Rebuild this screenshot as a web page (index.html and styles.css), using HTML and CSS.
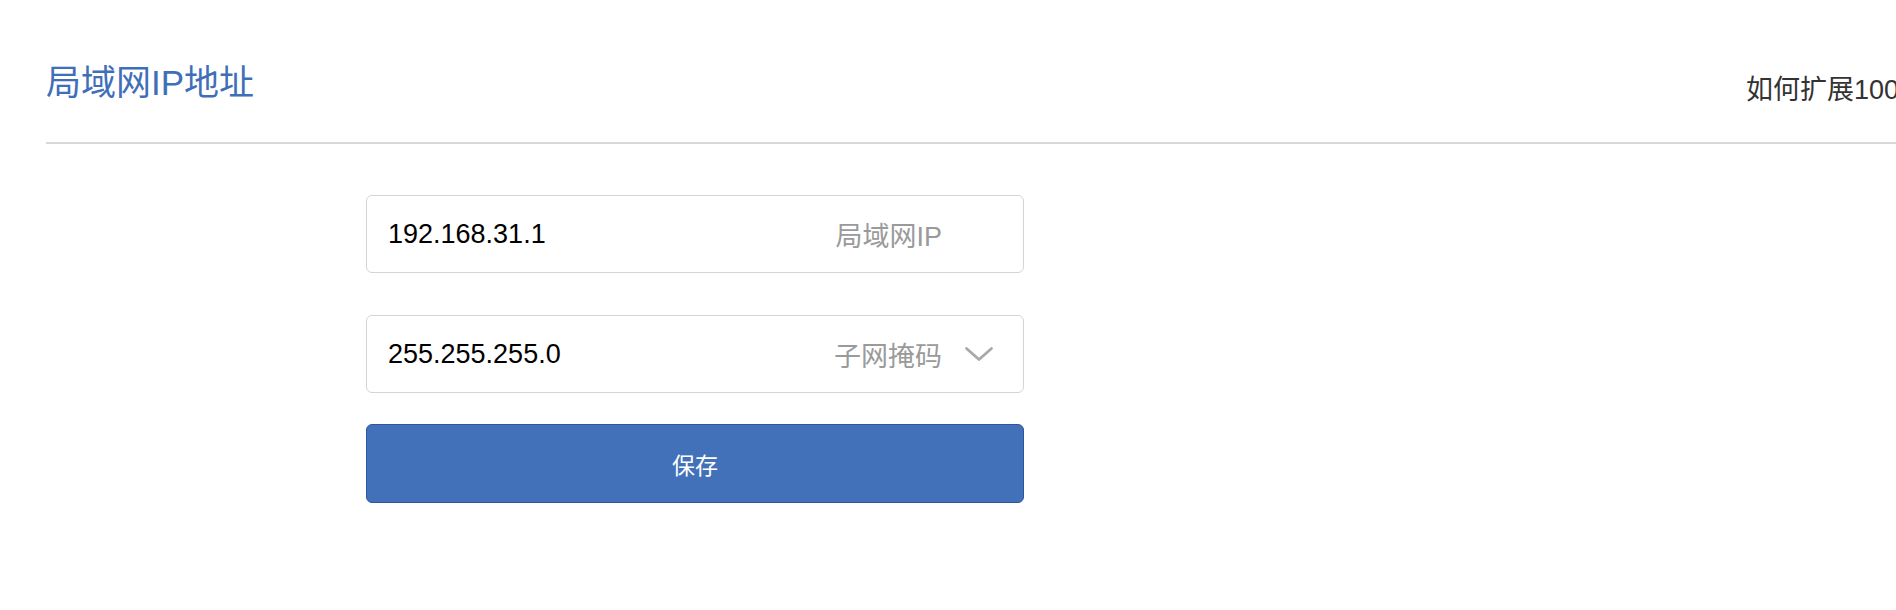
FILE: index.html
```html
<!DOCTYPE html>
<html lang="zh-CN">
<head>
    <meta charset="UTF-8">
    <title>局域网IP地址</title>
    <meta name="viewport" content="width=device-width, initial-scale=1.0">
    <link rel="stylesheet" href="styles.css">
</head>
<body>
    <div class="panel">
        <div class="header">
            <h1 class="title">局域网IP地址</h1>
            <a class="help" href="#">如何扩展100M宽带？</a>
        </div>
        <form class="form" onsubmit="return false;">
            <div class="field field-ip">
                <span class="value">192.168.31.1</span>
                <span class="label">局域网IP</span>
                <span class="suffix"></span>
            </div>
            <div class="field field-mask">
                <span class="value">255.255.255.0</span>
                <span class="label">子网掩码</span>
                <span class="suffix">
                    <svg width="30" height="16" viewBox="0 0 30 16">
                        <path d="M2.5 2.5 L15 13.5 L27.5 2.5" fill="none" stroke="#a9a9a9" stroke-width="2.8" stroke-linecap="round" stroke-linejoin="round"/>
                    </svg>
                </span>
            </div>
            <button class="save-btn" type="submit">保存</button>
        </form>
    </div>
</body>
</html>
```

FILE: styles.css
```css
body {
    font-family: 'Liberation Sans', 'Noto Sans CJK SC', sans-serif;
    background: #fff;
    margin: 0;
    padding: 0;
    overflow: hidden;
}
.panel {
    margin-left: 46px;
}
.header {
    display: grid;
    grid-template-columns: 1700px auto;
    align-items: start;
    height: 82px;
    padding-top: 60px;
    border-bottom: 2px solid #d8d8d8;
    white-space: nowrap;
}
.title {
    margin: 3px 0 0 0;
    font-size: 35px;
    line-height: 40px;
    font-weight: normal;
    color: #3f6fb8;
}
.help {
    margin-top: 14px;
    font-size: 27px;
    line-height: 32px;
    color: #333;
    text-decoration: none;
}
.form {
    width: 658px;
    margin: 51px 0 0 320px;
}
.field {
    display: flex;
    align-items: center;
    box-sizing: border-box;
    height: 78px;
    padding: 0 29px 0 21px;
    border: 1px solid #d4d4d4;
    border-radius: 6px;
    font-size: 27px;
}
.field-ip {
    margin-bottom: 42px;
}
.field-mask {
    margin-bottom: 31px;
}
.value {
    flex: 1;
    color: #000;
}
.label {
    color: #9a9a9a;
}
.suffix {
    display: flex;
    align-items: center;
    width: 30px;
    margin-left: 22px;
}
.save-btn {
    display: block;
    width: 100%;
    height: 79px;
    background: #4271b9;
    border: 1px solid #2f559c;
    border-radius: 6px;
    color: #fff;
    font-family: 'Liberation Sans', 'Noto Sans CJK SC', sans-serif;
    font-size: 23px;
    cursor: pointer;
}
```
